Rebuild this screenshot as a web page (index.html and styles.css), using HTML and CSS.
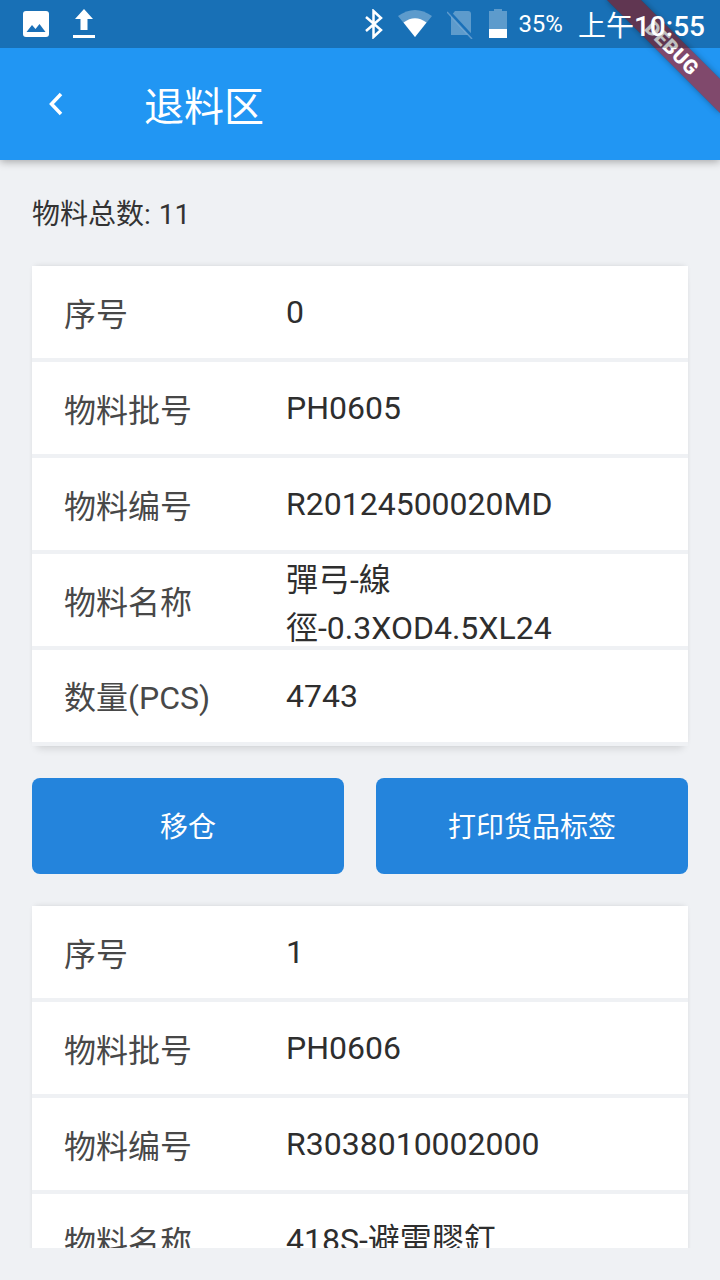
FILE: index.html
```html
<!DOCTYPE html>
<html lang="zh">
<head>
    <meta charset="UTF-8">
    <meta name="viewport" content="width=device-width, initial-scale=1.0">
    <title>退料区</title>
    <link rel="stylesheet" href="styles.css">
</head>
<body>

<header class="app-bar">
    <svg class="icon-back" width="20" height="26" viewBox="0 0 20 26">
        <path d="M15 3 L5.500 13 L15 23" fill="none" stroke="#fff" stroke-width="3.500"/>
    </svg>
    <h1>退料区</h1>
</header>

<div class="debug-banner">DEBUG</div>

<!-- sits over the app bar and the banner, dims both -->
<div class="status-bar">
    <div class="status-left">
        <svg class="icon-photo" width="28" height="28" viewBox="0 0 28 28">
            <rect x="1" y="1" width="26" height="26" rx="3" fill="#fff"/>
            <path d="M4.500 22 L10 15 L13.500 19 L17.500 14 L23.500 22 Z" fill="#1a70b8"/>
        </svg>
        <svg class="icon-upload" width="24" height="32" viewBox="0 0 24 32">
            <path d="M12 1 L21 11 H15.500 V22 H8.500 V11 H3 Z" fill="#fff"/>
            <rect x="1" y="27" width="22" height="3" fill="#fff"/>
        </svg>
    </div>
    <div class="status-right">
        <svg class="icon-bt" width="20" height="30" viewBox="0 0 20 30">
            <path d="M2 8 L17 21 L9.500 28 V2 L17 9 L2 22" fill="none" stroke="#fff" stroke-width="2.500"/>
        </svg>
        <svg class="icon-wifi" width="36" height="30" viewBox="0 0 36 30">
            <path d="M1 7 Q18 -5 35 7 L18 28 Z" fill="#fff" fill-opacity="0.3"/>
            <path d="M6.500 13.500 Q18 5 29.500 13.500 L18 28 Z" fill="#fff"/>
        </svg>
        <svg class="icon-sim" width="28" height="30" viewBox="0 0 28 30">
            <path d="M8 2 H21 Q24 2 24 5 V26 H4 V7 Z" fill="#fff" fill-opacity="0.3"/>
            <path d="M1 2 L26 29" stroke="#1a70b8" stroke-width="3.500"/>
            <path d="M0 3 L25 30" stroke="#fff" stroke-opacity="0.3" stroke-width="1.500"/>
        </svg>
        <svg class="icon-battery" width="20" height="30" viewBox="0 0 20 30">
            <path d="M6 0 H14 V2 H19 V29 H1 V2 H6 Z" fill="#fff" fill-opacity="0.3"/>
            <rect x="1" y="20" width="18" height="9" fill="#fff"/>
        </svg>
        <span class="battery-text">35%</span>
        <span class="clock"><span class="clock-ampm">上午</span><span class="clock-time">10:55</span></span>
    </div>
</div>

<main class="content">
    <p class="total">物料总数: 11</p>

    <section class="card">
        <div class="row"><span class="label">序号</span><span class="value">0</span></div>
        <div class="row"><span class="label">物料批号</span><span class="value">PH0605</span></div>
        <div class="row"><span class="label">物料编号</span><span class="value">R20124500020MD</span></div>
        <div class="row"><span class="label">物料名称</span><span class="value value-wrap">彈弓-線<br>徑-0.3XOD4.5XL24</span></div>
        <div class="row"><span class="label label-mixed">数量(PCS)</span><span class="value">4743</span></div>
    </section>

    <div class="actions">
        <button class="btn">移仓</button>
        <button class="btn">打印货品标签</button>
    </div>

    <section class="card">
        <div class="row"><span class="label">序号</span><span class="value">1</span></div>
        <div class="row"><span class="label">物料批号</span><span class="value">PH0606</span></div>
        <div class="row"><span class="label">物料编号</span><span class="value">R3038010002000</span></div>
        <div class="row"><span class="label">物料名称</span><span class="value">418S-避雷膠釘</span></div>
    </section>
</main>

</body>
</html>
```

FILE: styles.css
```css
* {
    box-sizing: border-box;
}
html, body {
    margin: 0;
    padding: 0;
}
body {
    width: 720px;
    height: 1280px;
    overflow: hidden;
    position: relative;
    background-color: #eff1f4;
    font-family: Roboto, "Noto Sans CJK SC", sans-serif;
    display: flex;
    flex-direction: column;
}
.status-bar {
    position: absolute;
    top: 0;
    left: 0;
    width: 720px;
    height: 48px;
    background-color: rgba(0, 0, 0, 0.25);
    color: white;
    display: flex;
    justify-content: space-between;
    align-items: center;
    z-index: 6;
}
.status-left {
    display: flex;
    align-items: center;
    padding-left: 22px;
    gap: 22px;
}
.status-right {
    display: flex;
    align-items: center;
    padding-right: 15px;
}
.icon-wifi {
    margin-left: 13px;
}
.icon-sim {
    margin-left: 14px;
}
.icon-battery {
    margin-left: 13px;
}
.battery-text {
    font-size: 24px;
    margin-left: 10px;
}
.clock {
    font-size: 28px;
    margin-left: 15px;
}
.clock-time {
    font-weight: 500;
}
.app-bar {
    height: 160px;
    flex-shrink: 0;
    padding-top: 48px;
    padding-left: 46px;
    background-color: #2196f3;
    color: white;
    display: flex;
    align-items: center;
    box-shadow: 0 2px 8px rgba(0, 0, 0, 0.3);
    position: relative;
}
.app-bar h1 {
    margin: 0 0 0 78px;
    font-size: 40px;
    font-weight: 400;
}
.debug-banner {
    position: absolute;
    top: 36px;
    left: 592px;
    width: 160px;
    height: 24px;
    line-height: 25px;
    transform: rotate(45deg);
    background-color: rgba(183, 28, 28, 0.63);
    box-shadow: 0 0 6px rgba(0, 0, 0, 0.35);
    color: white;
    font-size: 20px;
    font-weight: 900;
    text-align: center;
    letter-spacing: 0.5px;
    z-index: 5;
}
.content {
    height: 1088px;
    flex-shrink: 0;
    overflow: hidden;
    padding: 0 32px;
}
.total {
    margin: 0;
    padding-top: 37px;
    height: 106px;
    font-size: 28px;
    line-height: 36px;
    word-spacing: 1px;
    color: #333;
}
.card {
    background-color: #eff1f4;
    box-shadow: 0 7px 8px -5px rgba(0, 0, 0, 0.14), 0 -2px 6px -3px rgba(0, 0, 0, 0.16);
}
.row {
    height: 96px;
    border-bottom: 4px solid #eff1f4;
    background-clip: padding-box;
    background-color: white;
    display: flex;
    align-items: center;
    overflow: hidden;
}
.label {
    width: 254px;
    padding-left: 32px;
    flex-shrink: 0;
    font-size: 32px;
    line-height: 48px;
    color: #484848;
    position: relative;
    top: 3px;
}
.label-mixed {
    top: 2px;
}
.value {
    font-size: 32px;
    line-height: 48px;
    color: #2e2e2e;
}
.value-wrap {
    padding-top: 8px;
}
.actions {
    display: flex;
    gap: 32px;
    margin: 32px 0;
}
.btn {
    flex: 1;
    height: 96px;
    padding: 0 0 2px;
    border: none;
    border-radius: 8px;
    background-color: #2484dc;
    color: white;
    font-family: inherit;
    font-size: 28px;
    cursor: pointer;
}
```
